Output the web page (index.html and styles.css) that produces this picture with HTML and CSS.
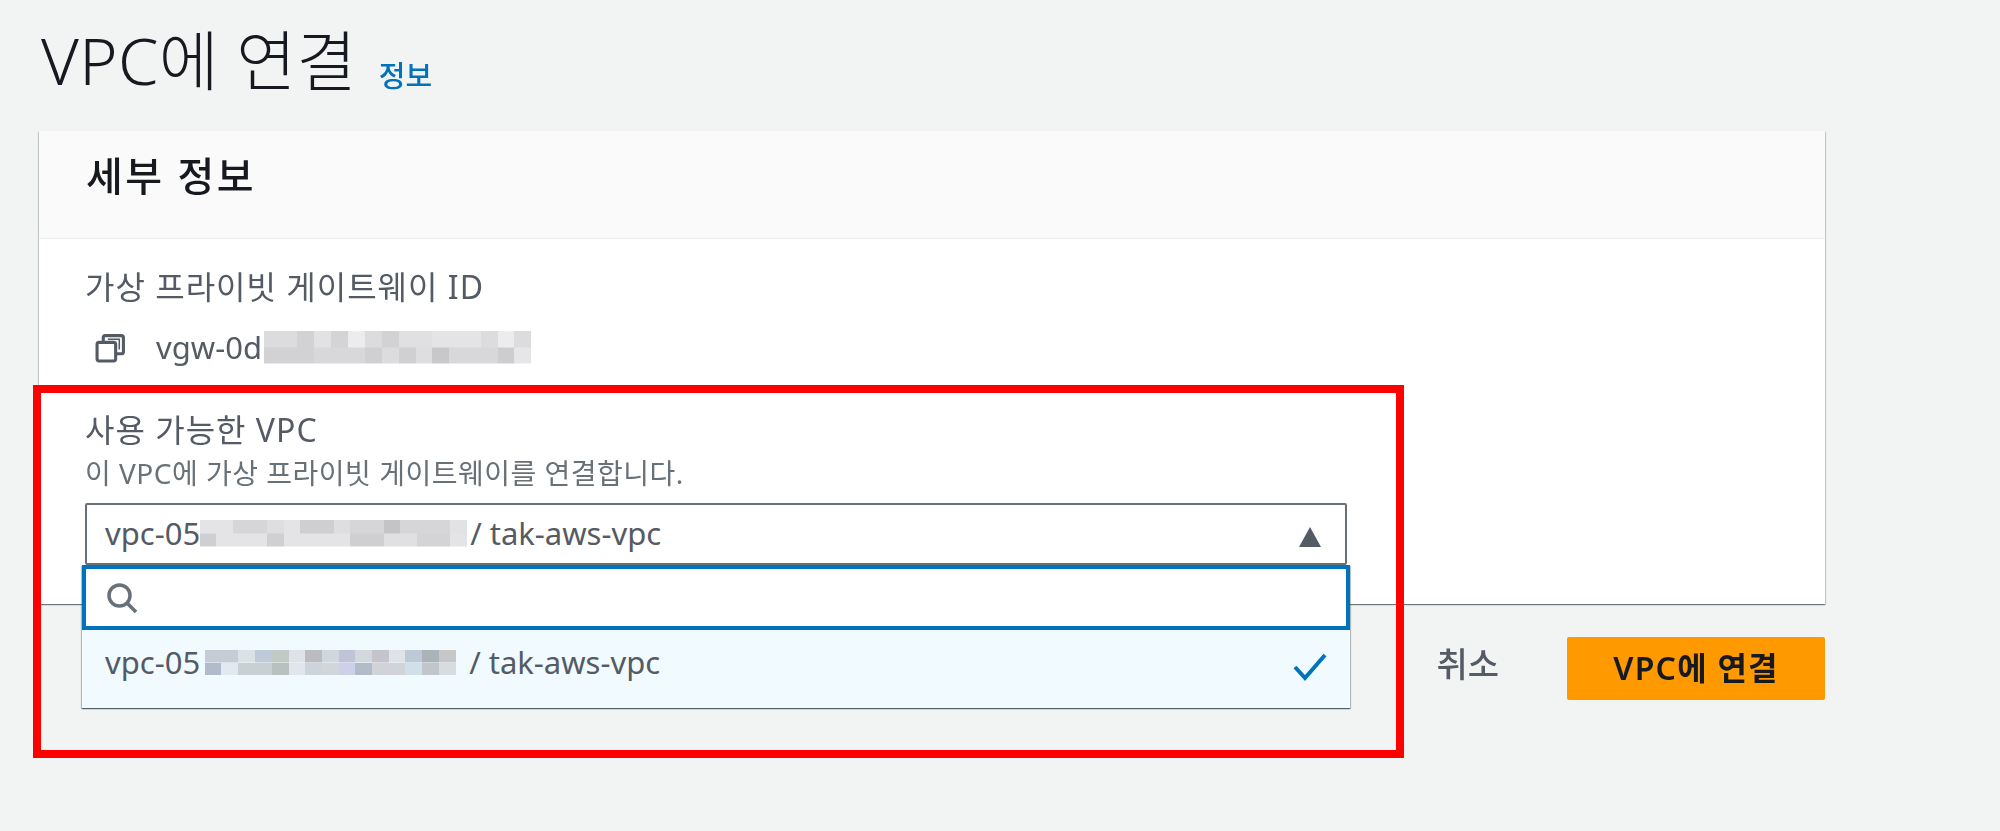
FILE: index.html
```html
<!DOCTYPE html>
<html lang="ko">
<head>
	<meta charset="utf-8">
	<title>VPC에 연결</title>
	<link rel="stylesheet" href="styles.css">
</head>
<body>
	<main class="content">
		<header class="page-head">
			<h1>VPC에 연결</h1>
			<a class="info" href="#">정보</a>
		</header>

		<section class="card">
			<h2 class="card-head">세부 정보</h2>
			<div class="card-body">
				<p class="label">가상 프라이빗 게이트웨이 ID</p>
				<div class="id-row">
					<svg class="copy-icon" viewBox="0 0 30 30" fill="none" stroke="#545b64" stroke-width="3">
						<rect x="2" y="10" width="18" height="18" rx="2"/>
						<path d="M8 10V5.500a2 2 0 0 1 2-2h15.500a2 2 0 0 1 2 2V19a2 2 0 0 1-2 2H20"/>
						<path d="M12.500 7h11v10" stroke-width="1.500"/>
					</svg>
					<span>vgw-0d</span>
					<span class="mosaic mosaic-vgw"></span>
				</div>

				<div class="field">
					<p class="label">사용 가능한 VPC</p>
					<p class="hint">이 VPC에 가상 프라이빗 게이트웨이를 연결합니다.</p>
					<div class="select">
						<span class="value">vpc-05</span>
						<span class="mosaic mosaic-top"></span>
						<span class="value">/ tak-aws-vpc</span>
						<svg class="caret" viewBox="0 0 22 20"><path d="M11 0 22 20H0Z" fill="#545b64"/></svg>

						<div class="dropdown">
							<div class="search">
								<svg class="search-icon" viewBox="0 0 32 32" fill="none" stroke="#687078" stroke-width="3.500">
									<circle cx="13.500" cy="13.500" r="10.500"/>
									<path d="M21 21 30 30"/>
								</svg>
							</div>
							<div class="option">
								<span class="value">vpc-05</span>
								<span class="mosaic mosaic-opt"></span>
								<span class="value">/ tak-aws-vpc</span>
								<svg class="check" viewBox="0 0 34 28" fill="none" stroke="#0073bb" stroke-width="4"><path d="M2 14 12 25 32 2"/></svg>
							</div>
						</div>
					</div>
				</div>
			</div>
		</section>

		<footer class="actions">
			<a class="cancel" href="#">취소</a>
			<button class="primary">VPC에 연결</button>
		</footer>
	</main>

	<div class="callout"></div>
</body>
</html>
```

FILE: styles.css
```css
/* fonts */
body {
	font-family: "Noto Sans", "Noto Sans CJK KR", sans-serif;
	color: #16191f;
}

h1 {
	font-size: 65px;
	font-weight: 300;
	letter-spacing: 0.4px;
	line-height: 80px;
}

.info {
	font-size: 29px;
	font-weight: 500;
}

.card-head {
	font-size: 40px;
	font-weight: 500;
	letter-spacing: 2.500px;
	line-height: 46px;
}

.label {
	font-size: 32px;
	letter-spacing: 1px;
	line-height: 36px;
}

.hint {
	font-size: 28px;
	letter-spacing: 0.5px;
	line-height: 32px;
}

.id-row,
.select {
	font-size: 31px;
}

.cancel {
	font-size: 34px;
	font-weight: 500;
}

.primary {
	font-family: inherit;
	font-size: 32px;
	font-weight: 600;
	letter-spacing: 1.200px;
}

/* layout */
body {
	margin: 0;
	min-height: 831px;
	position: relative;
	overflow: hidden;
}

p,
h1,
h2 {
	margin: 0;
}

.content {
	width: 1786px;
	margin-left: 39px;
	filter: blur(0.7px);
}

.page-head {
	display: flex;
	align-items: flex-end;
	gap: 22px;
	height: 131px;
	padding: 0 0 31px 2px;
	box-sizing: border-box;
}

.info {
	margin-bottom: 5px;
}

.card-head {
	height: 108px;
	padding: 22px 47px 0;
	box-sizing: border-box;
}

.card-body {
	padding: 30px 46px 0;
	height: 365px;
	box-sizing: border-box;
}

.id-row {
	display: flex;
	align-items: center;
	height: 40px;
	margin-top: 22px;
}

.copy-icon {
	width: 31px;
	height: 31px;
	margin: 0 30px 0 10px;
}

.field {
	margin-top: 45px;
}

.hint {
	margin-top: 9px;
}

.select {
	position: relative;
	display: flex;
	align-items: center;
	height: 62px;
	width: 1262px;
	margin-top: 14px;
	padding: 0 0 2px 18px;
	box-sizing: border-box;
}

.mosaic {
	display: block;
	flex: none;
}

.mosaic-vgw {
	width: 267px;
	height: 33px;
	margin-left: 2px;
}

.mosaic-top {
	width: 267px;
	height: 27px;
	margin-right: 3px;
}

.mosaic-opt {
	width: 251px;
	height: 25px;
	margin: 9px 13px 0 5px;
}

.caret {
	position: absolute;
	right: 24px;
	top: 22px;
	width: 22px;
	height: 20px;
}

/* opened list lies over the card and the footer */
.dropdown {
	position: absolute;
	left: -5px;
	top: 60px;
	width: 1268px;
	z-index: 2;
}

.search {
	display: flex;
	align-items: center;
	height: 65px;
	padding-left: 20px;
	box-sizing: border-box;
}

.search-icon {
	width: 32px;
	height: 32px;
}

.option {
	display: flex;
	align-items: flex-start;
	height: 78px;
	padding: 11px 0 0 23px;
	box-sizing: border-box;
	position: relative;
}

.check {
	position: absolute;
	right: 23px;
	top: 23px;
	width: 34px;
	height: 28px;
}

.actions {
	display: flex;
	align-items: center;
	justify-content: flex-end;
	gap: 68px;
	margin-top: 33px;
}

.cancel {
	margin-bottom: 12px;
}

.primary {
	width: 258px;
	height: 63px;
	padding: 0 0 6px;
}

/* annotation drawn on the screenshot */
.callout {
	position: absolute;
	left: 33px;
	top: 385px;
	width: 1371px;
	height: 373px;
	box-sizing: border-box;
	border: 8px solid #f00;
	filter: blur(0.7px);
	z-index: 3;
}

/* colors */
body {
	background-color: #f2f3f3;
}

h1 {
	color: #16191f;
}

.info {
	color: #0073bb;
	text-decoration: none;
}

.card {
	background-color: #fff;
	box-shadow: 0 1px 1px 0 rgba(0, 28, 36, 0.4), 1px 1px 1px 0 rgba(0, 28, 36, 0.15), -1px 1px 1px 0 rgba(0, 28, 36, 0.15);
}

.card-head {
	background-color: #fafafa;
	border-bottom: 1px solid #eaeded;
}

.label,
.id-row,
.value {
	color: #545b64;
}

.hint {
	color: #687078;
}

.select {
	background-color: #fff;
	border: 2px solid #687078;
	border-radius: 2px;
}

.dropdown {
	box-shadow: 0 1px 1px 0 rgba(0, 28, 36, 0.5), 1px 1px 1px 0 rgba(0, 28, 36, 0.2), -1px 1px 1px 0 rgba(0, 28, 36, 0.2);
}

.search {
	background-color: #fff;
	border: 4px solid #0073bb;
}

.option {
	background-color: #f1faff;
}

.cancel {
	color: #545b64;
	text-decoration: none;
}

.primary {
	background-color: #f90;
	border: 0;
	border-radius: 2px;
	color: #16191f;
}

.mosaic {
	background-repeat: no-repeat;
	background-size: 100% 50%;
	background-position: top, bottom;
}

.mosaic-vgw {
	background-image:
		linear-gradient(90deg, #dcdcde 0 33px, #d2d2d4 33px 50px, #e2e2e4 50px 67px, #d4d4d6 67px 84px, #ececee 84px 101px, #dcdcde 101px 118px, #d2d2d4 118px 135px, #e0e0e2 135px 168px, #e4e4e6 168px 217px, #dcdcde 217px 234px, #ececee 234px 250px, #dcdcde 250px),
		linear-gradient(90deg, #d2d2d4 0 50px, #d8d8da 50px 101px, #d0d0d2 101px 118px, #dcdcde 118px 135px, #d0d0d2 135px 152px, #dedee0 152px 168px, #c8c8ca 168px 185px, #d8d8da 185px 234px, #cdcdcf 234px 250px, #e6e6e8 250px);
}

.mosaic-top {
	background-image:
		linear-gradient(90deg, #e4e4e6 0 33px, #d6d6d8 33px 67px, #dedee0 67px 84px, #e4e4e6 84px 100px, #cfcfd1 100px 134px, #dedee0 134px 150px, #d6d6d8 150px 184px, #c4c4c6 184px 200px, #d6d6d8 200px 250px, #e2e2e4 250px),
		linear-gradient(90deg, #cfcfd1 0 16px, #e4e4e6 16px 67px, #d0d0d2 67px 84px, #e4e4e6 84px 150px, #cfcfd1 150px 184px, #e0e0e2 184px 217px, #d4d4d6 217px 250px, #e4e4e6 250px);
}

.mosaic-opt {
	background-image:
		linear-gradient(90deg, #c6ccd6 0 33px, #dbe2e6 33px 50px, #bfcad8 50px 67px, #c2cac6 67px 84px, #dde3e8 84px 100px, #bcbcc0 100px 117px, #cfd8de 117px 134px, #c0c4d6 134px 150px, #d2d8de 150px 167px, #c4c4ca 167px 184px, #dde3e8 184px 200px, #bccad6 200px 217px, #aab4b8 217px 234px, #c6c8c8 234px),
		linear-gradient(90deg, #b0bccc 0 16px, #e0eaf0 16px 33px, #c8d0d4 33px 67px, #b8c0c0 67px 84px, #e0e6ea 84px 100px, #ccd4dc 100px 117px, #d0d6da 117px 134px, #ccd0e8 134px 150px, #b0bcc8 150px 167px, #d0d4d8 167px 200px, #d0e0ea 200px 217px, #c0c6cc 217px 234px, #d8dcdc 234px);
}
```
